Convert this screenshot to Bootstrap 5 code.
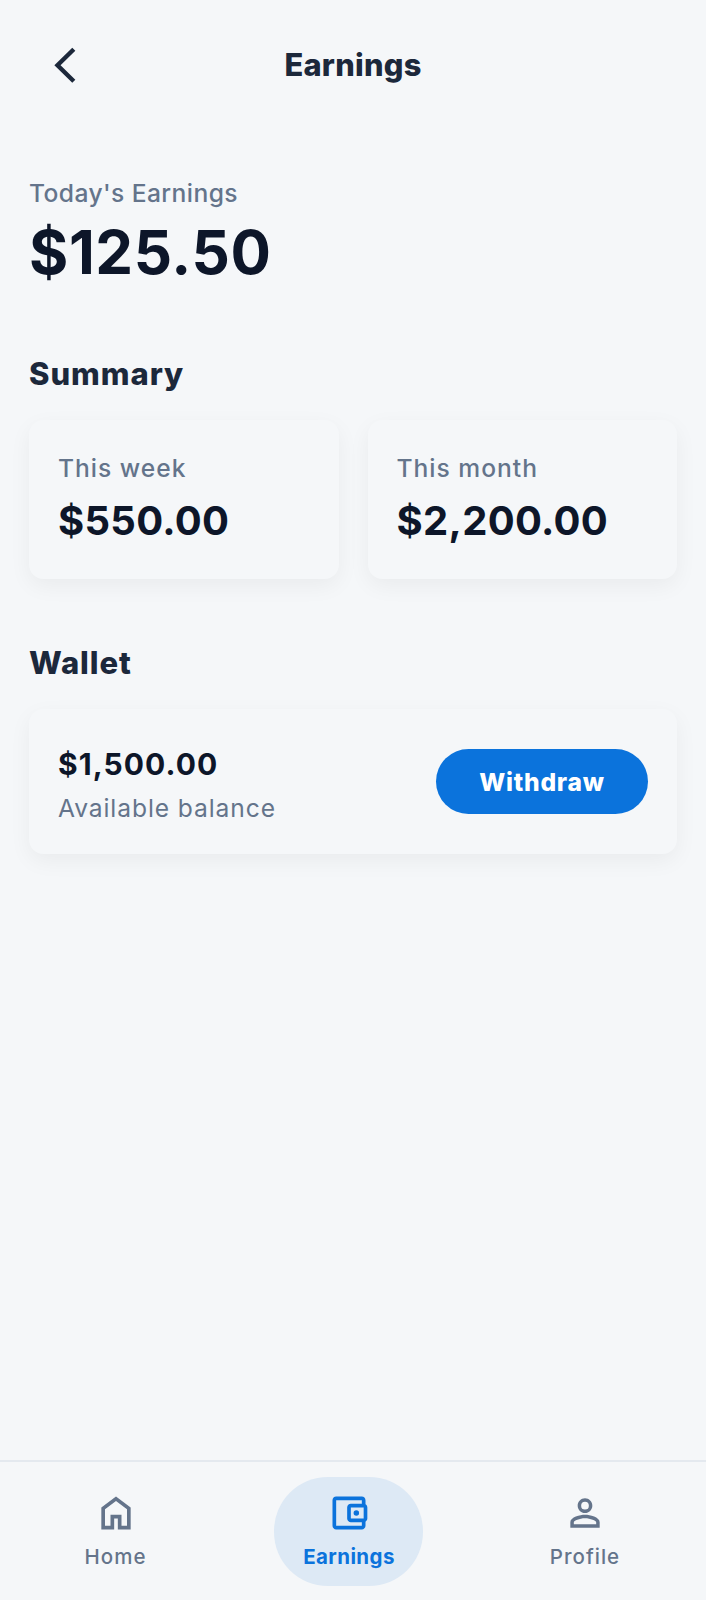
<!DOCTYPE html>
<html lang="en">
<head>
<meta charset="utf-8">
<meta name="viewport" content="width=device-width, initial-scale=1">
<title>Earnings</title>
<link rel="stylesheet" href="https://cdn.jsdelivr.net/npm/bootstrap@5.3.0/dist/css/bootstrap.min.css">
<style>
body{font-family:Inter,"Liberation Sans",sans-serif;background:#f5f7f9;color:#0d1629;height:1600px}
.topbar{height:130px;padding:0 42px}
.topbar h1{font-size:30.8px;line-height:44px;font-weight:800;letter-spacing:.25px;color:#1c283b}
.side-slot{width:44px;height:44px}
.page-body{padding:44.5px 29px 0}
.muted-label{font-size:24.6px;line-height:36px;font-weight:500;letter-spacing:1px;color:#64748b}
.muted-label.today{letter-spacing:.42px}
.muted-label.regular{font-weight:400;letter-spacing:.9px}
.total{font-size:60px;line-height:86px;font-weight:750;letter-spacing:.6px;margin-top:-2px;margin-bottom:56px}
.section-title{font-size:31px;line-height:45px;font-weight:800;letter-spacing:.95px;color:#1c283b;margin:0 0 24px}
.panel{background:#f5f7f9;border:0;border-radius:14.5px;box-shadow:0 7px 22px rgba(0,0,0,.05)}
.stats{gap:29px;margin-bottom:61px}
.stat{height:159.5px;padding:30px 29px;flex:1 1 0}
.amount{font-size:40px;line-height:54px;font-weight:750;letter-spacing:.3px;margin-top:8px}
.wallet{height:145px;padding:5px 29px 0}
.balance{font-size:30px;line-height:43px;font-weight:750;letter-spacing:1.05px;margin-bottom:4px}
.btn-withdraw{width:212px;height:65px;background:#0b73dc;color:#fff;font-size:24.6px;font-weight:800;letter-spacing:.75px;border:0;margin-top:-5px;padding:1px 0 0}
.btn-withdraw:hover{background:#0965c2;color:#fff}
.tabbar{height:140px;border-top:2px solid #e4e9ef;padding:15px 57px 14px 56px}
.tab{width:119px;height:109px;border-radius:54px;color:#64748b;font-size:20.5px;line-height:28px;font-weight:500;letter-spacing:1px;text-decoration:none;padding-top:14px}
.tab svg{margin-bottom:8px;fill:currentColor}
.tab.active{width:149px;background:#dde9f5;color:#0b73dc;font-weight:750;letter-spacing:.4px;padding-left:2px}
.tab.profile{width:128px}
</style>
</head>
<body class="d-flex flex-column">
<header class="topbar d-flex align-items-center justify-content-between">
<a href="#" class="side-slot" aria-label="Back"><svg class="d-block" width="44" height="44" viewBox="0 0 44 44" fill="none" stroke="#1c283b" stroke-width="4.4"><path d="M31.8 6.2 15.5 22.2l16.3 16"/></svg></a>
<h1 class="m-0">Earnings</h1>
<span class="side-slot"></span>
</header>
<main class="page-body flex-grow-1">
<section>
<div class="muted-label today">Today's Earnings</div>
<div class="total">$125.50</div>
</section>
<section>
<h2 class="section-title">Summary</h2>
<div class="stats d-flex">
<div class="card panel stat"><div class="muted-label">This week</div><div class="amount">$550.00</div></div>
<div class="card panel stat"><div class="muted-label">This month</div><div class="amount">$2,200.00</div></div>
</div>
</section>
<section>
<h2 class="section-title">Wallet</h2>
<div class="card panel wallet flex-row align-items-center justify-content-between">
<div><div class="balance">$1,500.00</div><div class="muted-label regular">Available balance</div></div>
<button type="button" class="btn btn-withdraw rounded-pill">Withdraw</button>
</div>
</section>
</main>
<nav class="tabbar d-flex justify-content-between">
<a href="#" class="tab d-flex flex-column align-items-center"><svg width="44" height="44" viewBox="0 0 24 24"><path d="M6 19h3v-6h6v6h3v-9l-6-4.5L6 10v9Zm-2 2V9l8-6 8 6v12h-7v-6h-2v6H4Z"/></svg><span>Home</span></a>
<a href="#" class="tab active d-flex flex-column align-items-center"><svg width="44" height="44" viewBox="0 0 24 24"><path d="M21 7.28V5c0-1.1-.9-2-2-2H5c-1.11 0-2 .9-2 2v14c0 1.1.89 2 2 2h14c1.1 0 2-.9 2-2v-2.28c.59-.35 1-.98 1-1.72V9c0-.74-.41-1.38-1-1.72zM20 9v6h-7V9h7zM5 19V5h14v2h-6c-1.1 0-2 .9-2 2v6c0 1.1.9 2 2 2h6v2H5z"/><circle cx="16" cy="12" r="1.5"/></svg><span>Earnings</span></a>
<a href="#" class="tab profile d-flex flex-column align-items-center"><svg width="44" height="44" viewBox="0 0 24 24"><path d="M12 5.9a2.1 2.1 0 1 1 0 4.2 2.1 2.1 0 0 1 0-4.2m0 9c2.97 0 6.1 1.46 6.1 2.1v1.1H5.9V17c0-.64 3.13-2.1 6.1-2.1M12 4C9.79 4 8 5.79 8 8s1.79 4 4 4 4-1.79 4-4-1.79-4-4-4zm0 9c-2.67 0-8 1.34-8 4v3h16v-3c0-2.66-5.33-4-8-4z"/></svg><span>Profile</span></a>
</nav>
<script src="https://cdn.jsdelivr.net/npm/bootstrap@5.3.0/dist/js/bootstrap.bundle.min.js"></script>
</body>
</html>
